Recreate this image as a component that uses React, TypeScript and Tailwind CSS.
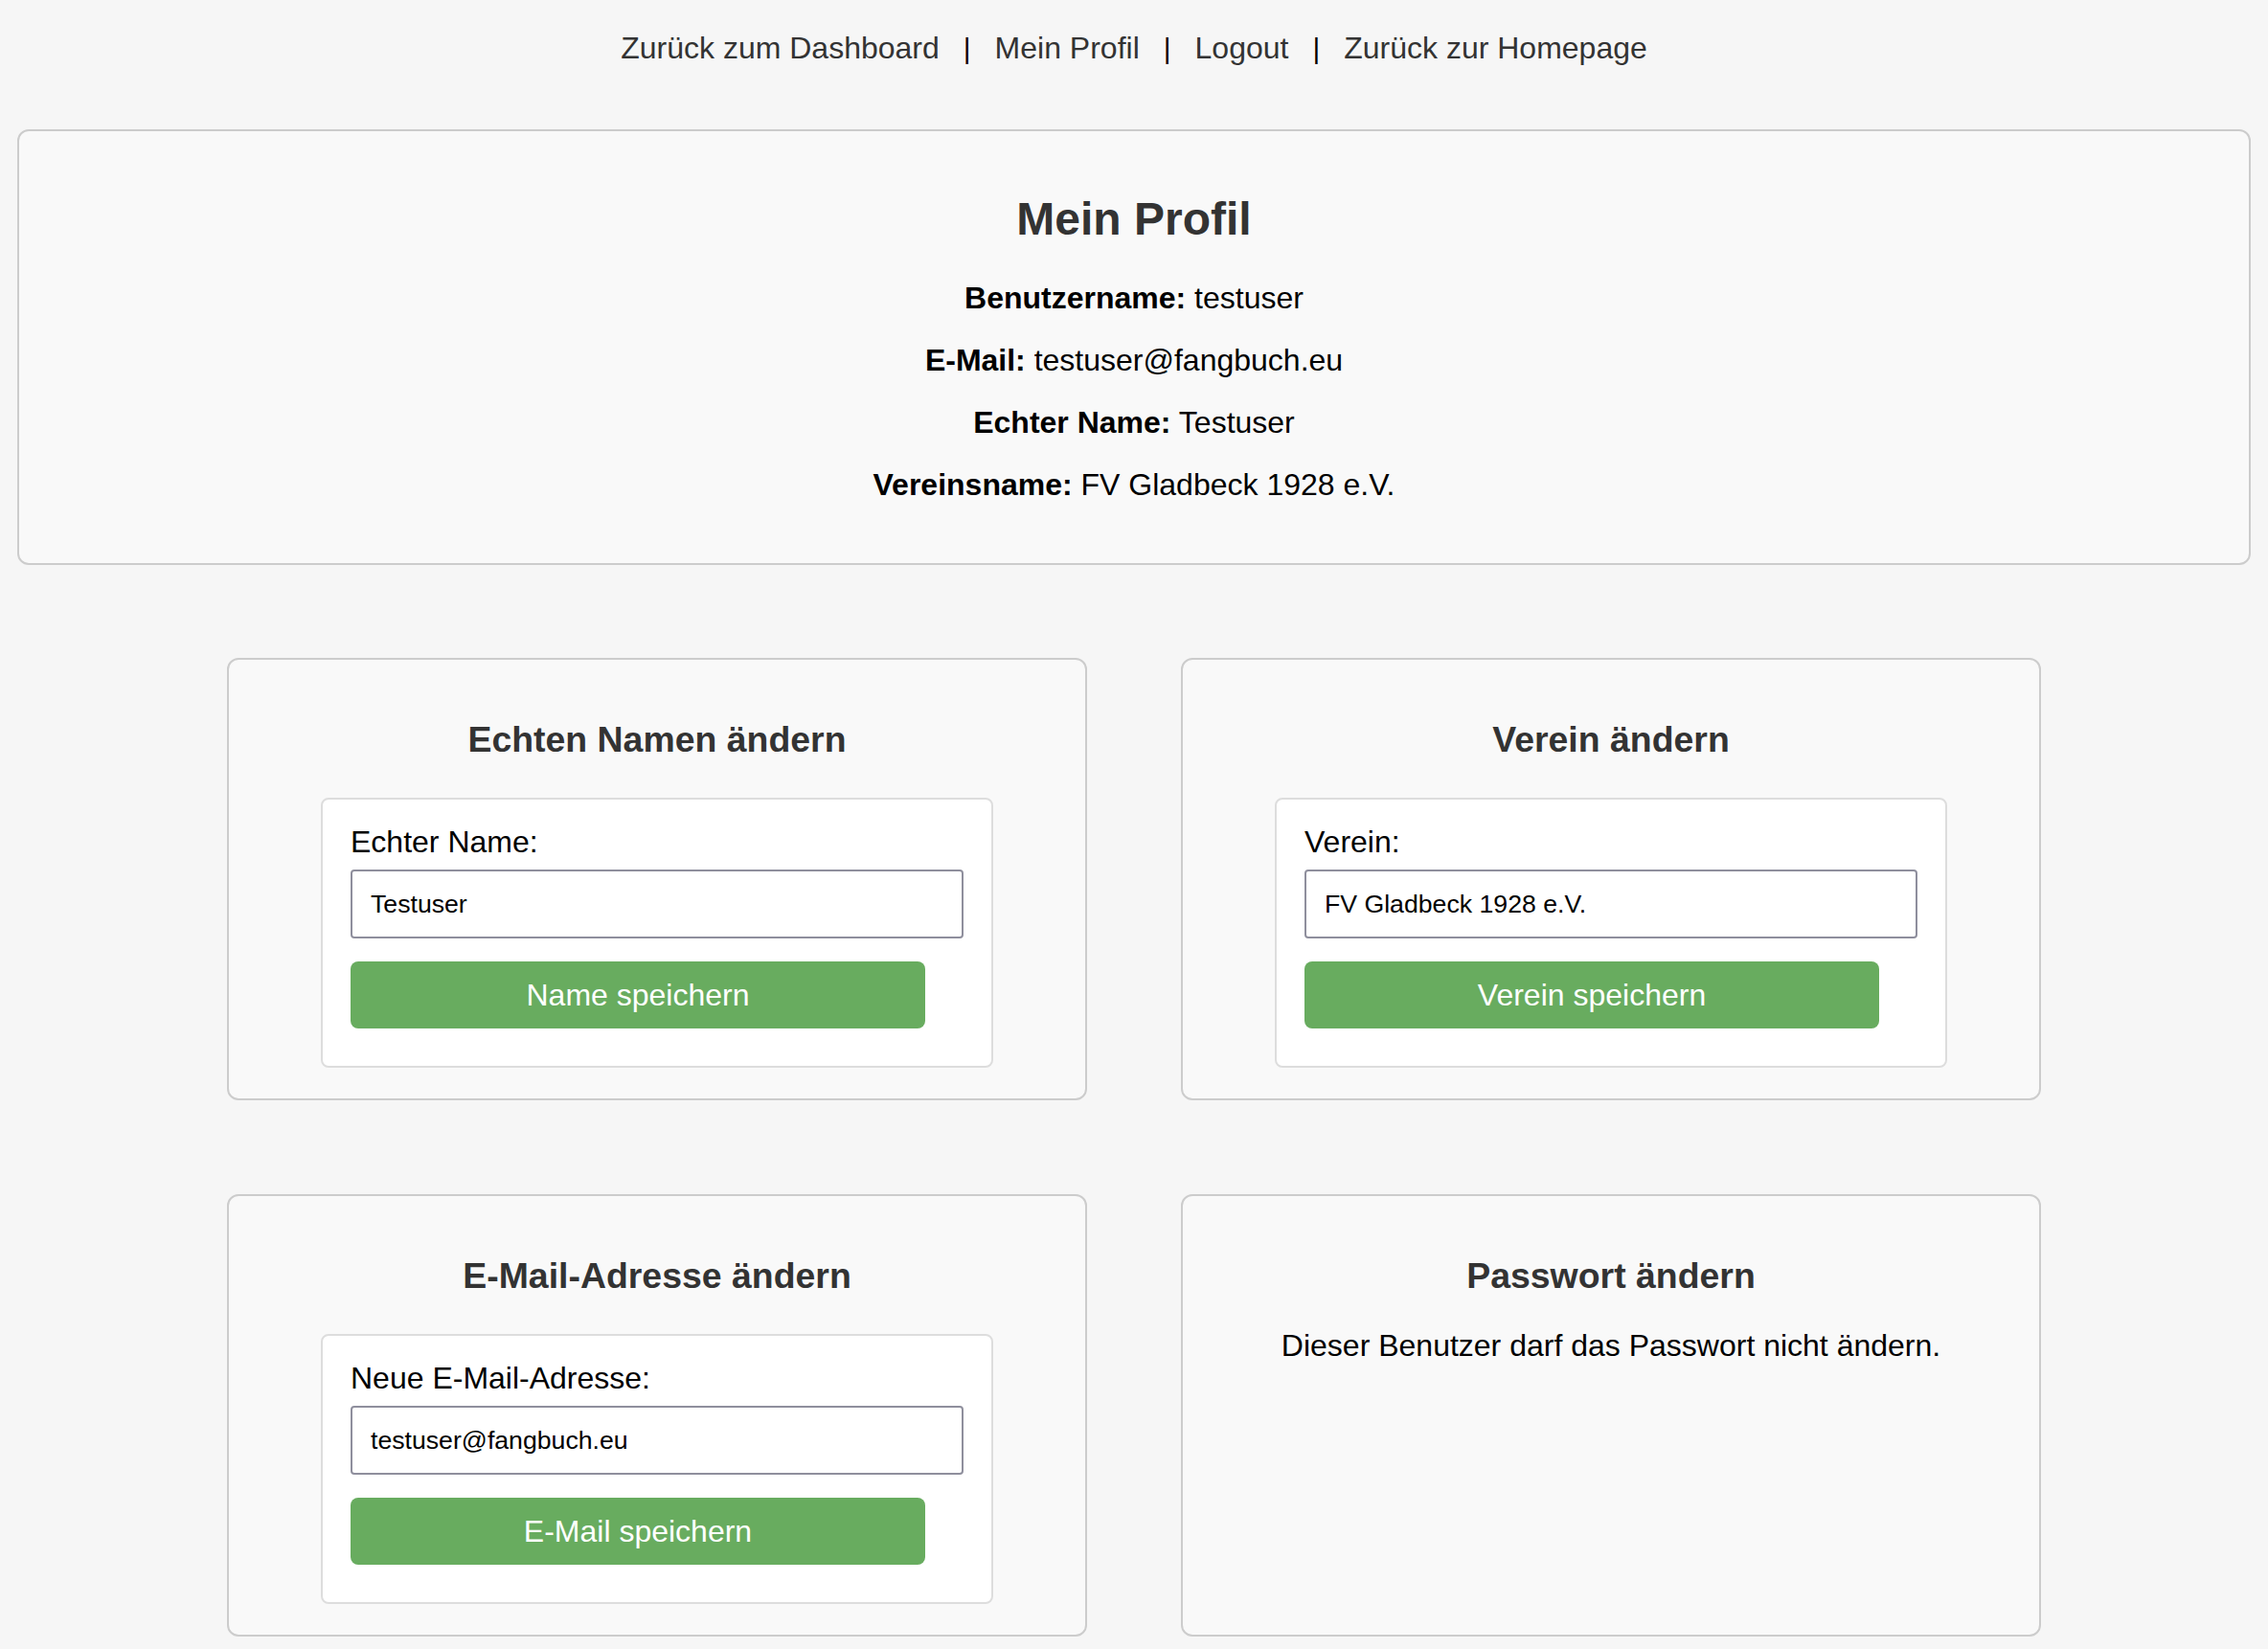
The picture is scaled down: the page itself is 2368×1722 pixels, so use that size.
import React from "react";

function FormCard({ title, label, value, button }: { title: string; label: string; value: string; button: string }) {
  return (
    <div className="rounded-[12px] border-2 border-[#cccccc] bg-[#f9f9f9] pt-[62px] pb-[32px] flex flex-col items-center">
      <h3 className="text-[37.44px] leading-[43px] font-bold text-[#333333]">{title}</h3>
      <div className="mt-[39px] w-[702px] rounded-[8px] border-2 border-[#dddddd] bg-white px-[29px] pt-[26px] pb-[39px]">
        <label className="block text-[32px] leading-[37px] text-black">{label}</label>
        <input
          type="text"
          defaultValue={value}
          className="mt-[10px] block w-full h-[72px] rounded-[4px] border-2 border-[#8f8f9d] bg-white px-[19px] text-[26.67px] text-black outline-none"
        />
        <button className="mt-[24px] block w-[600px] h-[70px] rounded-[8px] bg-[#68ac5f] text-white text-[32px] leading-[37px]">
          {button}
        </button>
      </div>
    </div>
  );
}

function Sep() {
  return <span className="px-[25px] text-black text-[30px]">|</span>;
}

export default function App() {
  return (
    <div className="min-h-screen bg-[#f6f6f6] font-['Liberation_Sans',Arial,Helvetica,sans-serif] pb-[3px]">
      <nav className="pt-[32px] flex justify-center items-baseline text-[32px] leading-[37px] text-[#333333]">
        <a href="#">Zurück zum Dashboard</a>
        <Sep />
        <a href="#">Mein Profil</a>
        <Sep />
        <a href="#">Logout</a>
        <Sep />
        <a href="#">Zurück zur Homepage</a>
      </nav>

      <section className="mx-[18px] mt-[66px] rounded-[12px] border-2 border-[#cccccc] bg-[#f9f9f9] pt-[64px] pb-[63px] text-center">
        <h2 className="text-[48px] leading-[56px] font-bold text-[#333333] mb-[36px]">Mein Profil</h2>
        <div className="flex flex-col gap-[28px] text-[32px] leading-[37px] text-black">
          <p><b>Benutzername:</b> testuser</p>
          <p><b>E-Mail:</b> testuser@fangbuch.eu</p>
          <p><b>Echter Name:</b> Testuser</p>
          <p><b>Vereinsname:</b> FV Gladbeck 1928 e.V.</p>
        </div>
      </section>

      <div className="mx-auto mt-[97px] w-[1894px] grid grid-cols-2 gap-[98px]">
        <FormCard title="Echten Namen ändern" label="Echter Name:" value="Testuser" button="Name speichern" />
        <FormCard title="Verein ändern" label="Verein:" value="FV Gladbeck 1928 e.V." button="Verein speichern" />
        <FormCard title="E-Mail-Adresse ändern" label="Neue E-Mail-Adresse:" value="testuser@fangbuch.eu" button="E-Mail speichern" />
        <div className="rounded-[12px] border-2 border-[#cccccc] bg-[#f9f9f9] pt-[62px] pb-[32px] flex flex-col items-center">
          <h3 className="text-[37.44px] leading-[43px] font-bold text-[#333333]">Passwort ändern</h3>
          <p className="mt-[33px] text-[32px] leading-[37px] text-black">Dieser Benutzer darf das Passwort nicht ändern.</p>
        </div>
      </div>
    </div>
  );
}
